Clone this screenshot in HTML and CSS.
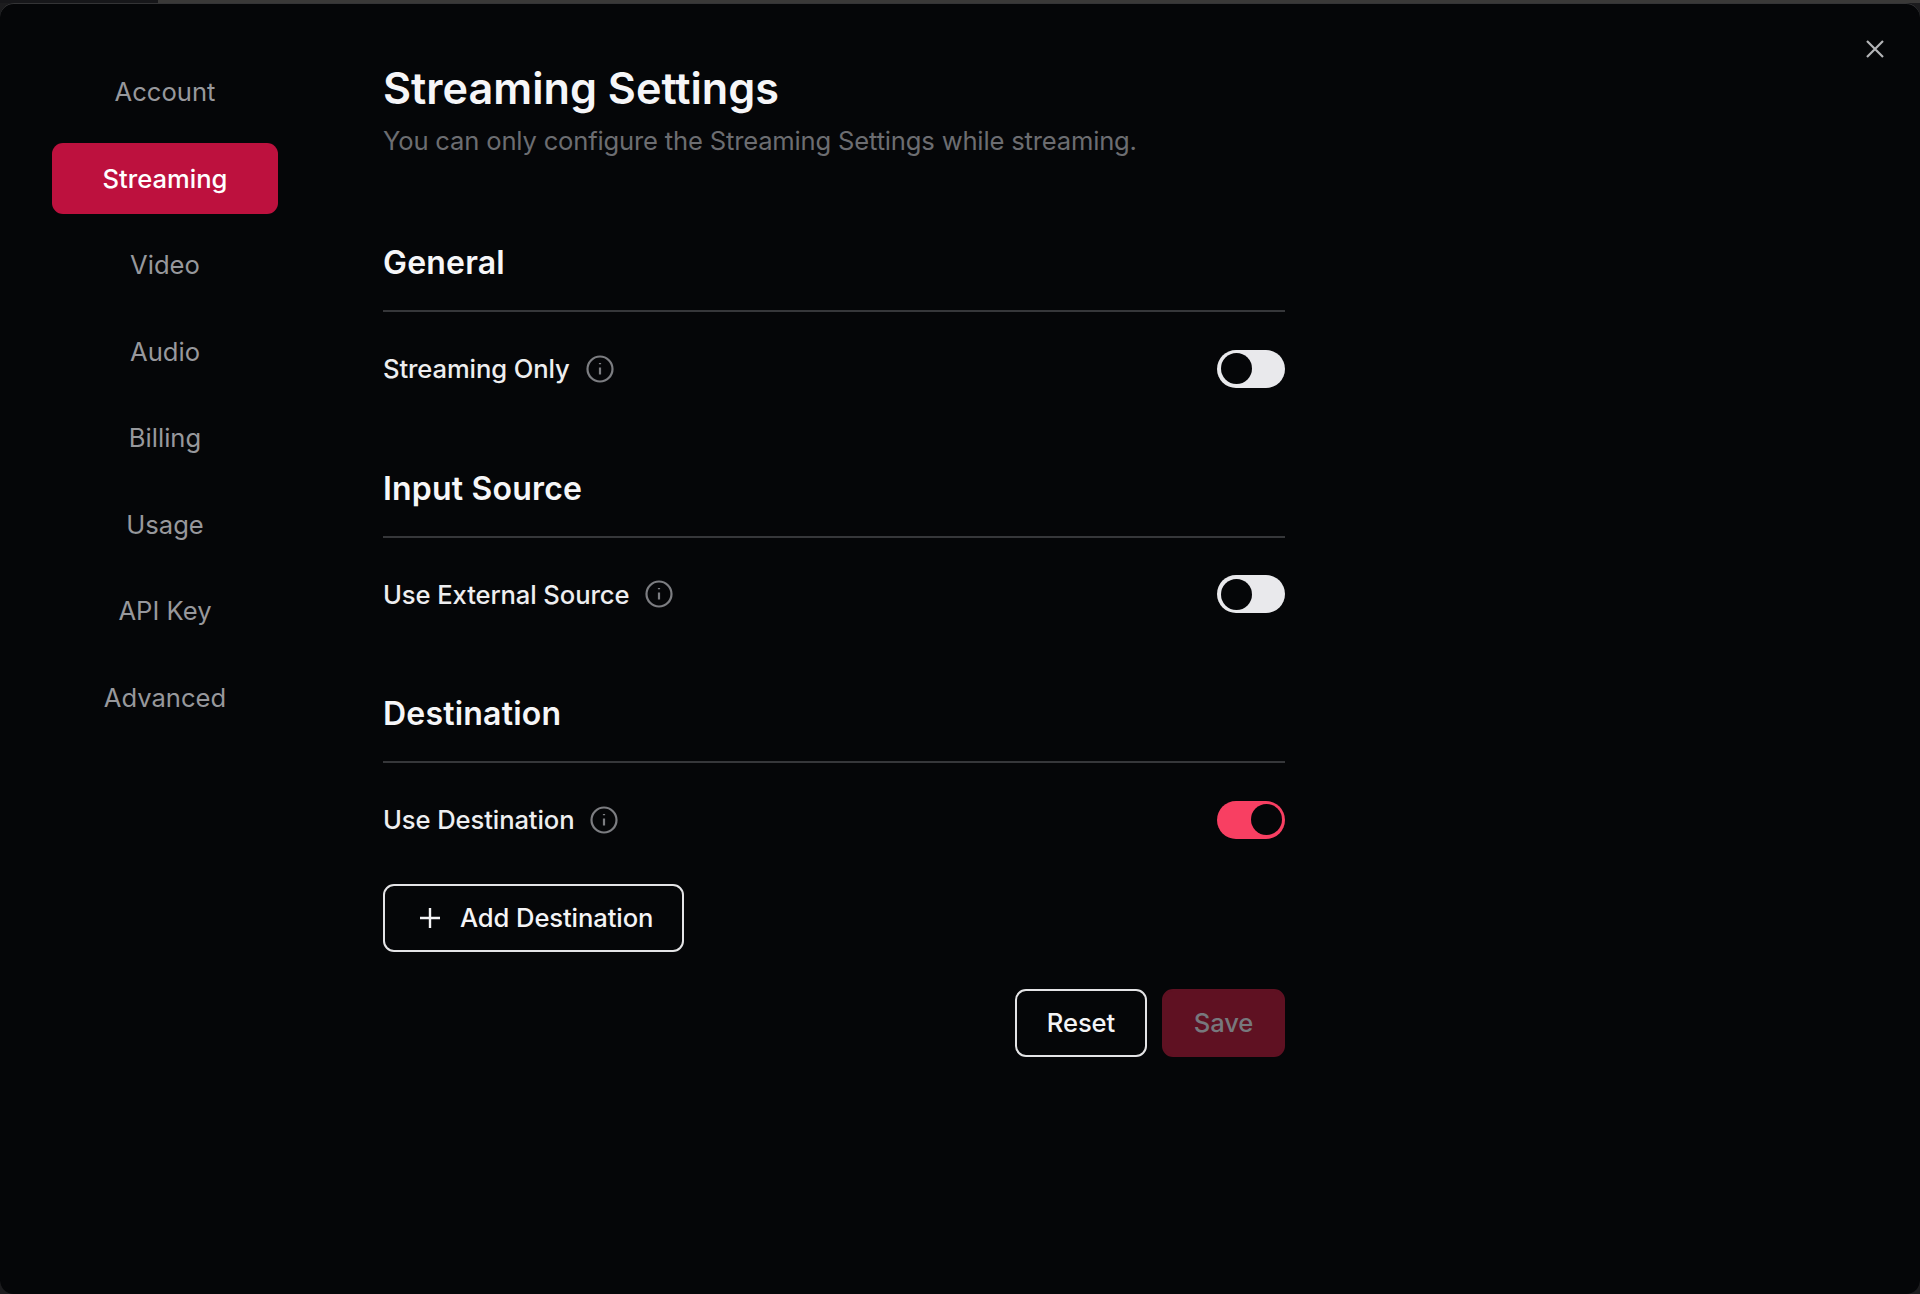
FILE: index.html
```html
<!DOCTYPE html>
<html lang="en">
<head>
  <meta charset="UTF-8" />
  <title>Streaming Settings</title>
  <link rel="stylesheet" href="styles.css">
</head>
<body>
  <div class="topbar"><span class="topbar-dark"></span></div>
  <div class="modal">
    <button class="close" aria-label="Close">
      <svg width="20" height="20" viewBox="0 0 20 20"><path d="M2 2L18 18M18 2L2 18" /></svg>
    </button>

    <nav class="sidebar">
      <a class="nav-item">Account</a>
      <a class="nav-item active">Streaming</a>
      <a class="nav-item">Video</a>
      <a class="nav-item">Audio</a>
      <a class="nav-item">Billing</a>
      <a class="nav-item">Usage</a>
      <a class="nav-item">API Key</a>
      <a class="nav-item">Advanced</a>
    </nav>

    <main class="content">
      <h1>Streaming Settings</h1>
      <p class="subtitle">You can only configure the Streaming Settings while streaming.</p>

      <section class="group">
        <h2>General</h2>
        <div class="row">
          <span class="label">Streaming Only</span>
          <svg class="info" viewBox="0 0 28 28"><circle cx="14" cy="14" r="12.5" /><path d="M14 12.5V19.5M14 8V9.2" /></svg>
          <span class="toggle"><span class="knob"></span></span>
        </div>
      </section>

      <section class="group">
        <h2>Input Source</h2>
        <div class="row">
          <span class="label">Use External Source</span>
          <svg class="info" viewBox="0 0 28 28"><circle cx="14" cy="14" r="12.5" /><path d="M14 12.5V19.5M14 8V9.2" /></svg>
          <span class="toggle"><span class="knob"></span></span>
        </div>
      </section>

      <section class="group">
        <h2>Destination</h2>
        <div class="row">
          <span class="label">Use Destination</span>
          <svg class="info" viewBox="0 0 28 28"><circle cx="14" cy="14" r="12.5" /><path d="M14 12.5V19.5M14 8V9.2" /></svg>
          <span class="toggle on"><span class="knob"></span></span>
        </div>
        <button class="btn add">
          <svg width="22" height="22" viewBox="0 0 22 22"><path d="M11 1V21M1 11H21" /></svg>
          <span>Add Destination</span>
        </button>
      </section>

      <div class="actions">
        <button class="btn reset">Reset</button>
        <button class="btn save">Save</button>
      </div>
    </main>
  </div>
</body>
</html>
```

FILE: styles.css
```css
* {
  box-sizing: border-box;
}
html, body {
  height: 100%;
}
body {
  margin: 0;
  background: #1c1c1e;
  font-family: Inter, 'Liberation Sans', sans-serif;
  color: #f4f4f6;
  overflow: hidden;
}
.topbar {
  height: 3px;
  background: #3a3938;
}
.topbar-dark {
  display: block;
  width: 158px;
  height: 3px;
  background: #17171a;
}
.modal {
  position: relative;
  display: flex;
  height: 1291px;
  padding: 0 0 0 52px;
  background: #050608;
  border-radius: 14px;
  box-shadow: inset 0 1px 0 #343436;
}
.close {
  position: absolute;
  top: 36px;
  right: 35px;
  padding: 0;
  background: none;
  border: none;
  width: 20px;
  height: 20px;
}
.close path {
  stroke: #b4b5b8;
  stroke-width: 2.2;
  fill: none;
}
.sidebar {
  display: flex;
  flex-direction: column;
  gap: 15.5px;
  width: 226px;
  padding-top: 53px;
}
.nav-item {
  height: 71px;
  display: flex;
  align-items: center;
  justify-content: center;
  font-size: 25.6px;
  color: #97989c;
  border-radius: 11px;
}
.nav-item.active {
  background: #bd113e;
  color: #fff;
  font-weight: 450;
}
.content {
  width: 902px;
  margin-left: 105px;
  padding-top: 53px;
}
h1 {
  margin: 0;
  font-size: 43.2px;
  line-height: 64px;
  font-weight: 600;
  color: #f6f6f8;
}
.subtitle {
  margin: 2px 0 0;
  font-size: 25.6px;
  line-height: 38px;
  letter-spacing: -0.18px;
  color: #6c6d71;
}
.group {
  margin-top: 39px;
}
.subtitle + .group {
  margin-top: 79px;
}
h2 {
  margin: 0;
  padding-bottom: 23px;
  font-size: 32px;
  line-height: 48px;
  font-weight: 600;
  letter-spacing: 0.2px;
  color: #f6f6f8;
  border-bottom: 2px solid #36373a;
}
.row {
  display: flex;
  align-items: center;
  height: 113.6px;
}
.label {
  font-size: 25.6px;
  font-weight: 450;
  letter-spacing: -0.1px;
  color: #eeeef0;
}
.info {
  width: 28px;
  height: 28px;
  margin-left: 16px;
  fill: none;
  stroke: #7c7d81;
  stroke-width: 2.2;
}
.toggle {
  display: flex;
  align-items: center;
  width: 68px;
  height: 38px;
  margin-left: auto;
  padding: 3.5px;
  background: #e9e9ec;
  border-radius: 19px;
}
.knob {
  width: 31px;
  height: 31px;
  background: #050608;
  border-radius: 50%;
}
.toggle.on {
  justify-content: flex-end;
  background: #f83f62;
}
.btn {
  height: 68px;
  font-family: inherit;
  font-size: 25.6px;
  font-weight: 450;
  letter-spacing: -0.1px;
  border-radius: 11px;
  color: #f4f4f6;
  background: none;
  border: 2px solid #e4e4e6;
}
.add {
  display: flex;
  align-items: center;
  gap: 19px;
  width: 301px;
  margin-top: 7px;
  padding: 0 0 0 34px;
  white-space: nowrap;
}
.add path {
  stroke: #f4f4f6;
  stroke-width: 2.4;
  fill: none;
}
.actions {
  display: flex;
  justify-content: flex-end;
  gap: 15px;
  margin-top: 37px;
}
.reset {
  width: 132px;
}
.save {
  width: 123px;
  background: #5f1122;
  border-color: #5f1122;
  color: #77787d;
}
```
